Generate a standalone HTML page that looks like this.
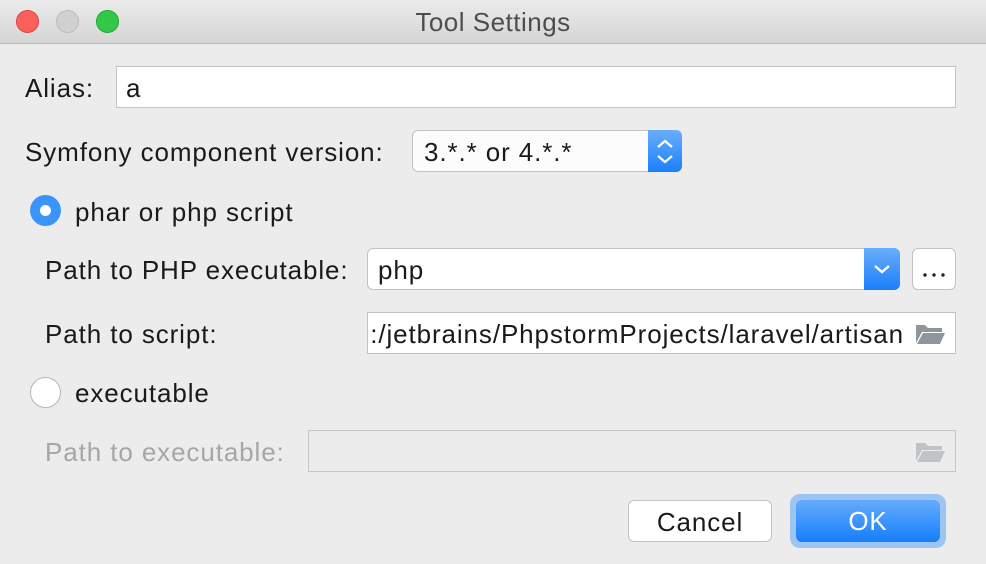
<!DOCTYPE html><html><head><style>
body{margin:0;width:986px;height:564px;background:#ececec;font-family:"Liberation Sans",sans-serif;font-size:26px;letter-spacing:0.9px;color:#1a1a1a;position:relative;overflow:hidden}
.a{position:absolute}
.tb{left:0;top:0;width:986px;height:43px;background:linear-gradient(#ebebeb,#d5d5d5);border-bottom:1px solid #b9b9b9;text-align:center;line-height:44px;color:#4d4d4d;font-size:26px;letter-spacing:0.5px}
.dot{width:23px;height:23px;border-radius:50%;top:10px}
.f{background:#fff;border:1px solid #c2c2c2;box-sizing:border-box}
.t{line-height:30px;white-space:nowrap}
.blue{background:linear-gradient(#6aaefc,#1b7ffa);border-radius:0 6px 6px 0}
</style></head><body>
<div class="a tb">Tool Settings</div>
<div class="a dot" style="left:16px;background:#fc605c;border:1px solid #e0443e;box-sizing:border-box"></div>
<div class="a dot" style="left:56px;background:#d0d0d0;border:1px solid #bcbcbc;box-sizing:border-box"></div>
<div class="a dot" style="left:96px;background:#34c84a;border:1px solid #1fa82f;box-sizing:border-box"></div>

<div class="a t" style="left:25px;top:73px">Alias:</div>
<div class="a f" style="left:116px;top:66px;width:840px;height:42px"></div>
<div class="a t" style="left:126px;top:73px">a</div>

<div class="a t" style="left:25px;top:137px">Symfony component version:</div>
<div class="a f" style="left:412px;top:130px;width:270px;height:42px;border-radius:6px;background:#fcfcfc"></div>
<div class="a blue" style="left:648px;top:130px;width:34px;height:42px"></div>
<svg class="a" style="left:648px;top:130px" width="34" height="42"><path d="M10 17l7-6 7 6M10 26l7 6 7-6" stroke="#fff" stroke-width="2.2" fill="none"/></svg>
<div class="a t" style="left:424px;top:137px">3.*.* or 4.*.*</div>

<div class="a" style="left:30px;top:195px;width:31px;height:31px;border-radius:50%;background:#3b94fb"></div>
<div class="a" style="left:40px;top:205px;width:11px;height:11px;border-radius:50%;background:#fff"></div>
<div class="a t" style="left:75px;top:197px">phar or php script</div>

<div class="a t" style="left:45px;top:255px">Path to PHP executable:</div>
<div class="a f" style="left:367px;top:248px;width:533px;height:42px;border-radius:6px"></div>
<div class="a blue" style="left:864px;top:248px;width:36px;height:42px"></div>
<svg class="a" style="left:864px;top:248px" width="36" height="42"><path d="M11 18l7 6 7-6" stroke="#fff" stroke-width="2.4" fill="none"/></svg>
<div class="a t" style="left:378px;top:255px">php</div>
<div class="a f" style="left:912px;top:248px;width:44px;height:42px;border-radius:6px"></div>
<svg class="a" style="left:912px;top:248px" width="44" height="42"><circle cx="13" cy="27" r="1.7" fill="#222"/><circle cx="22" cy="27" r="1.7" fill="#222"/><circle cx="31" cy="27" r="1.7" fill="#222"/></svg>

<div class="a t" style="left:45px;top:319px">Path to script:</div>
<div class="a f" style="left:367px;top:312px;width:589px;height:42px"></div>
<div class="a" style="left:370px;top:319px;width:534px;height:30px;overflow:hidden"><div class="a t" style="right:0;top:0">s:/jetbrains/PhpstormProjects/laravel/artisan</div></div>
<svg class="a" style="left:914px;top:321px" width="32" height="24"><path d="M2 4h9l3 3h14v4H8L2 22z" fill="#8e959c"/><path d="M9 12h22l-5 11H3z" fill="#8e959c"/></svg>

<div class="a" style="left:30px;top:377px;width:31px;height:31px;border-radius:50%;background:#fff;border:1px solid #b5b5b5;box-sizing:border-box"></div>
<div class="a t" style="left:75px;top:378px">executable</div>

<div class="a t" style="left:45px;top:437px;color:#a6a6a6">Path to executable:</div>
<div class="a" style="left:308px;top:430px;width:648px;height:42px;border:1px solid #c6c6c6;box-sizing:border-box"></div>
<svg class="a" style="left:914px;top:439px" width="32" height="24"><path d="M2 4h9l3 3h14v4H8L2 22z" fill="#bfc3c6"/><path d="M9 12h22l-5 11H3z" fill="#bfc3c6"/></svg>

<div class="a f" style="left:628px;top:500px;width:144px;height:42px;border-radius:6px;text-align:center;line-height:42px">Cancel</div>
<div class="a" style="left:790px;top:494px;width:156px;height:54px;border-radius:10px;background:#9ec4f3"></div>
<div class="a" style="left:796px;top:500px;width:144px;height:42px;border-radius:6px;background:linear-gradient(#66acfc,#157efb);color:#fff;text-align:center;line-height:42px">OK</div>
</body></html>
